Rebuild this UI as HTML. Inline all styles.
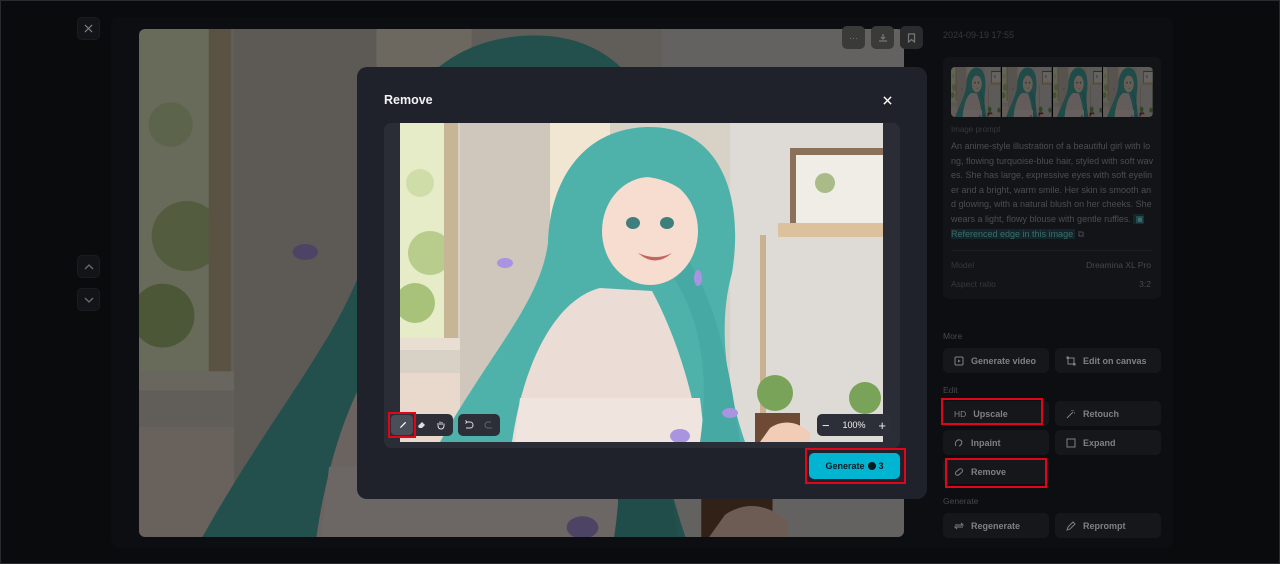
<!DOCTYPE html>
<html><head><meta charset="utf-8"><style>
*{box-sizing:border-box;margin:0;padding:0}
body{width:1280px;height:564px;background:#0a0b0d;font-family:"Liberation Sans",sans-serif;position:relative;overflow:hidden;border:1px solid #2a2b2e}
.abs{position:absolute}
.sq{position:absolute;width:23px;height:23px;border-radius:5px;background:#121418;border:1px solid #1a1c20;display:flex;align-items:center;justify-content:center}
.panel{position:absolute;left:110px;top:16px;width:1062px;height:531px;background:#0d0e11;border-radius:8px}
.btn{position:absolute;height:25px;width:106px;background:#15171b;border-radius:5px;color:#7d8086;font-size:9px;font-weight:bold;display:flex;align-items:center;padding-left:11px;gap:7px}
.btn svg{width:10px;height:10px}
.lbl{position:absolute;font-size:8.5px;color:#45484e}
.red{position:absolute;border:2px solid #e0061a}
.tb{position:absolute;height:22px;background:#2c2f37;border-radius:5px;display:flex;align-items:center}
</style></head><body>
<svg width="0" height="0" style="position:absolute">
<defs>
<symbol id="art" viewBox="0 0 483 319" preserveAspectRatio="none">
<rect width="483" height="319" fill="#d8d1c6"/>
<rect x="60" y="0" width="90" height="319" fill="#cfc7bc"/>
<rect x="150" y="0" width="60" height="319" fill="#f1e6d2"/>
<rect x="330" y="0" width="153" height="319" fill="#dedad5"/>
<rect x="0" y="0" width="48" height="215" fill="#e6ecc8"/>
<circle cx="20" cy="60" r="14" fill="#cfdda8"/><circle cx="30" cy="130" r="22" fill="#b8cc8c"/><circle cx="15" cy="180" r="20" fill="#a9c27a"/>
<rect x="44" y="0" width="14" height="225" fill="#c8b596"/>
<rect x="0" y="215" width="60" height="12" fill="#e8dfd2"/>
<rect x="0" y="250" width="60" height="69" fill="#e9d9cc"/>
<rect x="390" y="25" width="93" height="78" fill="#8c715a"/><rect x="396" y="32" width="87" height="68" fill="#efede6"/>
<circle cx="425" cy="60" r="10" fill="#a9bc88"/>
<rect x="378" y="100" width="105" height="14" fill="#dcc29c"/>
<rect x="360" y="112" width="6" height="207" fill="#c9b28f"/>
<circle cx="375" cy="270" r="18" fill="#7aa35a"/><circle cx="465" cy="275" r="16" fill="#7aa35a"/>
<rect x="355" y="290" width="45" height="29" fill="#6e4a34"/>
<path d="M250 4 C185 4 150 55 148 120 C140 180 90 230 40 319 L345 319 C325 260 318 200 332 150 C345 70 318 4 250 4Z" fill="#4eb2ab"/>
<path d="M200 165 C160 175 125 230 112 319 L300 319 C292 260 272 205 252 168Z" fill="#ebdcd6"/>
<path d="M120 275 L300 275 L305 319 L115 319Z" fill="#f0e4de"/>
<path d="M270 150 C300 190 310 250 300 319 L340 319 C330 250 320 190 290 140Z" fill="#47a9a3"/>
<ellipse cx="250" cy="108" rx="48" ry="54" fill="#f6ddd0"/>
<path d="M198 92 C200 40 240 25 270 30 C300 40 305 70 300 92 C290 60 250 50 230 55 C210 60 200 80 198 92Z" fill="#4eb2ab"/>
<ellipse cx="233" cy="100" rx="7" ry="6" fill="#3e7f7d"/><ellipse cx="267" cy="100" rx="7" ry="6" fill="#3e7f7d"/>
<path d="M238 130 Q255 145 272 130 Q256 138 238 130Z" fill="#c4665f"/>
<ellipse cx="105" cy="140" rx="8" ry="5" fill="#a894e0"/><ellipse cx="298" cy="155" rx="4" ry="8" fill="#a894e0"/><ellipse cx="330" cy="290" rx="8" ry="5" fill="#a894e0"/><ellipse cx="280" cy="313" rx="10" ry="7" fill="#a894e0"/>
<path d="M370 305 C385 295 400 300 410 310 L410 319 L360 319Z" fill="#f1cdb8"/>
</symbol>
</defs></svg>

<div class="panel"></div>
<div class="sq" style="left:76px;top:16px"><svg width="9" height="9" viewBox="0 0 10 10"><path d="M1 1L9 9M9 1L1 9" stroke="#7b7e84" stroke-width="1.3"/></svg></div>
<div class="sq" style="left:76px;top:254px"><svg width="10" height="8" viewBox="0 0 10 8"><path d="M1 6L5 2L9 6" stroke="#6b6e74" stroke-width="1.3" fill="none"/></svg></div>
<div class="sq" style="left:76px;top:287px"><svg width="10" height="8" viewBox="0 0 10 8"><path d="M1 2L5 6L9 2" stroke="#6b6e74" stroke-width="1.3" fill="none"/></svg></div>

<div class="abs" style="left:138px;top:28px;width:765px;height:508px;border-radius:6px;overflow:hidden;background:#000">
<svg width="765" height="508" style="opacity:0.45;display:block"><use href="#art"/></svg>
</div>
<div class="sq" style="left:841px;top:25px;background:#3a3a38;border:none;color:#777;font-size:9px">···</div>
<div class="sq" style="left:870px;top:25px;background:#3a3a38;border:none"><svg width="10" height="10" viewBox="0 0 10 10"><path d="M5 1V6M3 4L5 6L7 4M1 8H9" stroke="#777" stroke-width="1.2" fill="none"/></svg></div>
<div class="sq" style="left:899px;top:25px;background:#2a2b2d;border:none"><svg width="9" height="10" viewBox="0 0 9 10"><path d="M1.5 1H7.5V9L4.5 6.5L1.5 9Z" stroke="#777" stroke-width="1.2" fill="none"/></svg></div>

<div class="abs" style="left:942px;top:29px;font-size:9px;color:#35383e">2024-09-19 17:55</div>
<div class="abs" style="left:942px;top:56px;width:218px;height:242px;background:#121418;border-radius:6px"></div>
<div class="abs" style="left:950px;top:66px;width:202px;height:50px;display:flex;gap:1px;border-radius:4px;overflow:hidden;background:#000">
<svg width="50" height="50" style="opacity:0.42"><use href="#art"/></svg><svg width="50" height="50" style="opacity:0.42"><use href="#art"/></svg><svg width="50" height="50" style="opacity:0.42"><use href="#art"/></svg><svg width="50" height="50" style="opacity:0.42"><use href="#art"/></svg>
</div>
<div class="abs" style="left:950px;top:124px;font-size:8px;color:#35383e">Image prompt</div>
<div class="abs" style="left:950px;top:138px;width:204px;font-size:9px;line-height:14.6px;color:#4a4d53;word-break:break-all">An anime-style illustration of a beautiful girl with long, flowing turquoise-blue hair, styled with soft waves. She has large, expressive eyes with soft eyeliner and a bright, warm smile. Her skin is smooth and glowing, with a natural blush on her cheeks. She wears a light, flowy blouse with gentle ruffles. <span style="background:#14262a;color:#3b6d70;padding:0 2px;word-break:normal">▣ Referenced edge in this image</span> ⧉</div>
<div class="abs" style="left:950px;top:249px;width:202px;height:1px;background:#1c1e22"></div>
<div class="abs" style="left:950px;top:259px;font-size:8.5px;color:#35383e">Model</div>
<div class="abs" style="right:128px;top:259px;font-size:8.5px;color:#45484e">Dreamina XL Pro</div>
<div class="abs" style="left:950px;top:278px;font-size:8.5px;color:#35383e">Aspect ratio</div>
<div class="abs" style="right:128px;top:278px;font-size:8.5px;color:#45484e">3:2</div>

<div class="lbl" style="left:942px;top:330px">More</div>
<div class="btn" style="left:942px;top:347px"><svg viewBox="0 0 10 10"><rect x="1" y="1" width="8" height="8" rx="1" stroke="#7d8086" fill="none"/><path d="M4 3.5L6.5 5L4 6.5Z" fill="#7d8086"/></svg>Generate video</div>
<div class="btn" style="left:1054px;top:347px"><svg viewBox="0 0 10 10"><rect x="2" y="2" width="6" height="6" stroke="#7d8086" fill="none"/><rect x="0.5" y="0.5" width="2.5" height="2.5" fill="#7d8086"/><rect x="7" y="7" width="2.5" height="2.5" fill="#7d8086"/></svg>Edit on canvas</div>
<div class="lbl" style="left:942px;top:384px">Edit</div>
<div class="btn" style="left:942px;top:400px"><span style="font-weight:normal;font-size:8.5px">HD</span>Upscale</div>
<div class="btn" style="left:1054px;top:400px"><svg viewBox="0 0 10 10"><path d="M1 9L7 3M6 1V2M9 4H8M8 1.5L7.5 2" stroke="#7d8086" fill="none"/></svg>Retouch</div>
<div class="btn" style="left:942px;top:429px"><svg viewBox="0 0 10 10"><path d="M2 8C0 5 3 1 6 2C9 3 8 7 5 8" stroke="#7d8086" fill="none"/></svg>Inpaint</div>
<div class="btn" style="left:1054px;top:429px"><svg viewBox="0 0 10 10"><rect x="1" y="1" width="8" height="8" stroke="#7d8086" fill="none"/></svg>Expand</div>
<div class="btn" style="left:942px;top:458px"><svg viewBox="0 0 10 10"><rect x="1" y="3" width="8" height="4" rx="2" transform="rotate(-40 5 5)" stroke="#7d8086" fill="none"/></svg>Remove</div>
<div class="lbl" style="left:942px;top:495px">Generate</div>
<div class="btn" style="left:942px;top:512px"><svg viewBox="0 0 10 10"><path d="M1 4H9L7 2M9 6H1L3 8" stroke="#7d8086" fill="none"/></svg>Regenerate</div>
<div class="btn" style="left:1054px;top:512px"><svg viewBox="0 0 10 10"><path d="M1 9L2 6L7 1L9 3L4 8Z" stroke="#7d8086" fill="none"/></svg>Reprompt</div>
<div class="red" style="left:940px;top:397px;width:102px;height:27px"></div>
<div class="red" style="left:944px;top:457px;width:102px;height:30px"></div>

<div class="abs" style="left:356px;top:66px;width:570px;height:432px;background:#1f222a;border-radius:10px"></div>
<div class="abs" style="left:383px;top:92px;font-size:12.5px;font-weight:bold;color:#f2f3f5">Remove</div>
<svg class="abs" style="left:882px;top:95px" width="9" height="9" viewBox="0 0 10 10"><path d="M1 1L9 9M9 1L1 9" stroke="#fff" stroke-width="1.6"/></svg>
<div class="abs" style="left:383px;top:122px;width:516px;height:325px;background:#2a2d35;border-radius:7px"></div>
<svg class="abs" style="left:399px;top:122px" width="483" height="319"><use href="#art"/></svg>
<div class="tb" style="left:389px;top:413px;width:63px">
<div style="width:22px;height:20px;margin-left:1px;background:#4a4e58;border-radius:4px;display:flex;align-items:center;justify-content:center"><svg width="9" height="9" viewBox="0 0 10 10"><path d="M2 8L3 6L8 1L9 2L4 7Z" fill="#fff"/></svg></div>
<svg style="margin-left:4px" width="10" height="10" viewBox="0 0 10 10"><path d="M1 6L5 2L8 5L5 8H2Z" fill="#ddd"/></svg>
<svg style="margin-left:9px" width="10" height="10" viewBox="0 0 10 10"><path d="M2 5V3M4 5V1.5M6 5V2M8 5V3.5M2 5C2 8 3 9 5 9C7 9 8 8 8 5" stroke="#ddd" fill="none"/></svg>
</div>
<div class="tb" style="left:457px;top:413px;width:42px">
<svg style="margin-left:6px" width="10" height="10" viewBox="0 0 10 10"><path d="M3 2H6C8 2 9 3.5 9 5C9 6.5 8 8 6 8H2M3 2L1.5 3.5M3 2L1.5 0.5" stroke="#ddd" fill="none"/></svg>
<svg style="margin-left:10px" width="10" height="10" viewBox="0 0 10 10"><path d="M7 2H4C2 2 1 3.5 1 5C1 6.5 2 8 4 8H8" stroke="#666" fill="none"/></svg>
</div>
<div class="tb" style="left:816px;top:413px;width:74px;color:#eee;font-size:9px;justify-content:space-between;padding:0 5px">
<span style="font-size:13px">−</span><span>100%</span><span style="font-size:13px">+</span></div>
<div class="red" style="left:387px;top:411px;width:28px;height:26px"></div>

<div class="abs" style="left:808px;top:452px;width:91px;height:26px;background:#00b4d2;border-radius:5px;color:#0b1a20;font-size:9px;font-weight:bold;display:flex;align-items:center;justify-content:center;gap:3px">Generate <span style="display:inline-block;width:8px;height:8px;border-radius:50%;background:#0b1a20"></span> 3</div>
<div class="red" style="left:804px;top:447px;width:101px;height:36px"></div>
</body></html>
